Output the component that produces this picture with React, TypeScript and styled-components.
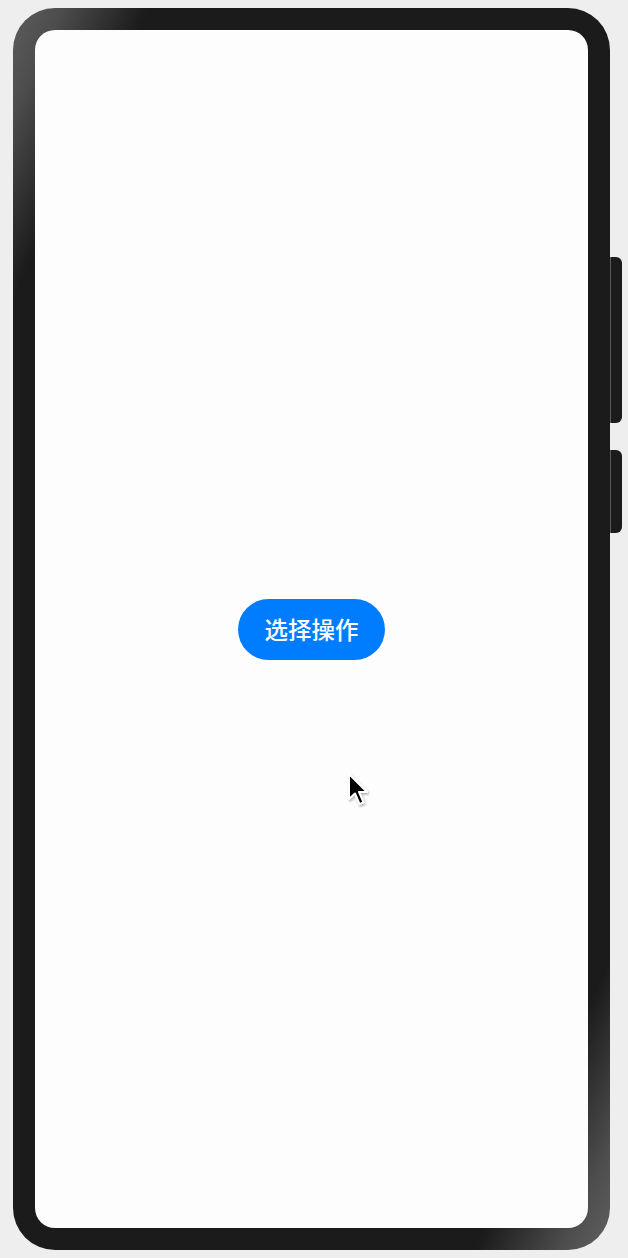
import React from "react"
import styled, { createGlobalStyle } from "styled-components"

// ■■■■■■■■■■■■■■■■■■■■■■■■■■■■■■■■■■■■■■■■■■■■■■■■■■■■■■■■■■■■■■■■■■■■■■■■■■■■■

export default function App() {
	return (
		<>
			<GlobalStyle />
			<StyledDevice>
				<StyledPhone>
					<StyledScreen>
						<StyledActionButton type="button">选择操作</StyledActionButton>
					</StyledScreen>
				</StyledPhone>
				<StyledKeys>
					<StyledKey $height={166} />
					<StyledKey $height={83} />
				</StyledKeys>
				<StyledCursor>
					<svg width="24" height="36" viewBox="0 0 24 36">
						<defs>
							<filter id="cursorShadow" x="-30%" y="-30%" width="160%" height="160%">
								<feDropShadow dx="1" dy="1.5" stdDeviation="1" floodColor="#000" floodOpacity="0.35" />
							</filter>
						</defs>
						<path
							d="M2 1 L2 26 L8 20.5 L12.5 31 L16.5 29.3 L12 19 L20 19 Z"
							fill="#000"
							stroke="#fff"
							strokeWidth="2"
							strokeLinejoin="round"
							filter="url(#cursorShadow)"
						/>
					</svg>
				</StyledCursor>
			</StyledDevice>
		</>
	)
}

// 〓〓〓〓〓〓〓〓〓〓〓〓〓〓〓〓〓〓〓〓〓〓〓〓〓〓〓〓〓〓	STYLED_COMPONENTS

const GlobalStyle = createGlobalStyle`
	html, body {
		margin: 0;
		padding: 0;
		background: #eeeeee;
		font-family: "Noto Sans CJK SC", "Noto Sans", sans-serif;
	}
`

const StyledDevice = styled.div`
	position: relative;
	display: flex;
	align-items: flex-start;
	padding: 8px 0 0 13px;
	width: 628px;
	height: 1258px;
	box-sizing: border-box;
`

const StyledPhone = styled.div`
	width: 597px;
	height: 1242px;
	box-sizing: border-box;
	padding: 22px;
	border-radius: 42px;
	background: linear-gradient(
		115deg,
		#5c5c5c 0%,
		#4e4e4e 4%,
		#363636 7.5%,
		#1b1b1b 11.5%,
		#1b1b1b 88.5%,
		#363636 92.5%,
		#4e4e4e 96%,
		#606060 100%
	);
`

const StyledScreen = styled.div`
	height: 100%;
	display: flex;
	align-items: center;
	justify-content: center;
	background: #fdfdfd;
	border-radius: 20px;
`

const StyledActionButton = styled.button`
	width: 147px;
	height: 61px;
	padding: 0;
	border: none;
	border-radius: 31px;
	background: #007dff;
	color: #ffffff;
	font-family: "Noto Sans CJK SC", sans-serif;
	font-size: 23.5px;
	font-weight: 500;
	cursor: pointer;
`

const StyledKeys = styled.div`
	display: flex;
	flex-direction: column;
	gap: 27px;
	margin-top: 249px;
`

const StyledKey = styled.div<{ $height: number }>`
	width: 12px;
	height: ${(p) => p.$height}px;
	background: #1b1b1b;
	border-left: 1px solid #5a5a5a;
	border-radius: 0 6px 6px 0;
	box-sizing: border-box;
`

const StyledCursor = styled.div`
	position: absolute;
	left: 347px;
	top: 773px;
	pointer-events: none;
`
